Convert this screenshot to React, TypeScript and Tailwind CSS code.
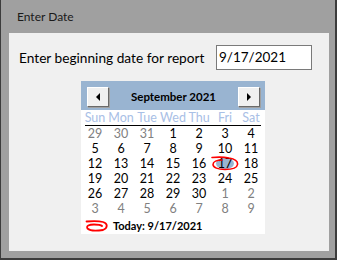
import type { ReactNode } from 'react';

const FONT = { fontFamily: 'Lato, "Noto Sans", sans-serif' };

type Day = { n: number; muted?: boolean };

const WEEKS: Day[][] = [
  [{ n: 29, muted: true }, { n: 30, muted: true }, { n: 31, muted: true }, { n: 1 }, { n: 2 }, { n: 3 }, { n: 4 }],
  [{ n: 5 }, { n: 6 }, { n: 7 }, { n: 8 }, { n: 9 }, { n: 10 }, { n: 11 }],
  [{ n: 12 }, { n: 13 }, { n: 14 }, { n: 15 }, { n: 16 }, { n: 17 }, { n: 18 }],
  [{ n: 19 }, { n: 20 }, { n: 21 }, { n: 22 }, { n: 23 }, { n: 24 }, { n: 25 }],
  [{ n: 26 }, { n: 27 }, { n: 28 }, { n: 29 }, { n: 30 }, { n: 1, muted: true }, { n: 2, muted: true }],
  [
    { n: 3, muted: true },
    { n: 4, muted: true },
    { n: 5, muted: true },
    { n: 6, muted: true },
    { n: 7, muted: true },
    { n: 8, muted: true },
    { n: 9, muted: true },
  ],
];

const DAY_NAMES = ['Sun', 'Mon', 'Tue', 'Wed', 'Thu', 'Fri', 'Sat'];

function NavButton({ children }: { children: ReactNode }) {
  return (
    <button
      type="button"
      className="w-[22px] h-[20px] flex items-center justify-center bg-[#f0f0f0] border border-t-white border-l-white border-r-[#696969] border-b-[#696969] shadow-[1px_1px_0_#a0a0a0]"
    >
      {children}
    </button>
  );
}

/** Month calendar with the selected day and the hand-drawn red marks. */
function MonthCalendar() {
  return (
    <div className="w-[184px] h-[153px] bg-white flex flex-col">
      <div className="h-[30px] bg-[#99b4d1] flex items-start justify-between pl-[6px] pr-[5px] pt-[6px]">
        <NavButton>
          <svg width="5" height="8" viewBox="0 0 5 8">
            <path d="M4 0 L0 4 L4 8 Z" fill="#000" />
          </svg>
        </NavButton>
        <span className="text-[11.5px] font-bold text-black leading-[20px]">September 2021</span>
        <NavButton>
          <svg width="5" height="8" viewBox="0 0 5 8">
            <path d="M1 0 L5 4 L1 8 Z" fill="#000" />
          </svg>
        </NavButton>
      </div>
      <div className="grid grid-cols-7 px-[1px] h-[14px] mt-[1px]">
        {DAY_NAMES.map((d) => (
          <span key={d} className="text-center text-[12.5px] leading-[14px] text-[#a9c0e6]">
            {d}
          </span>
        ))}
      </div>
      <div className="mx-[4px] h-[1px] bg-black" />
      <div className="flex flex-col px-[1px]">
        {WEEKS.map((week, wi) => (
          <div key={wi} className="grid grid-cols-7 h-[15px]">
            {week.map((d, di) => {
              const selected = wi === 2 && d.n === 17;
              return (
                <span
                  key={di}
                  className={[
                    'relative text-center text-[12.5px] leading-[15px]',
                    d.muted ? 'text-[#808080]' : 'text-black',
                  ].join(' ')}
                >
                  {selected && (
                    <span className="absolute left-[4px] top-[2px] w-[18px] h-[11px] rounded-[50%] bg-[#99b4d1]" />
                  )}
                  <span className="relative">{d.n}</span>
                  {selected && (
                    <svg
                      className="absolute left-[-1px] top-0"
                      width="30"
                      height="16"
                      viewBox="0 0 30 16"
                      fill="none"
                    >
                      <path
                        d="M1 1.5 C6 1 13 1 18 2 C24 3 27 5.5 26.5 8.5 C26 12 20 13.5 14 13.5 C7 13.5 2 11.5 2 8.5 C2 5.5 6 4 11 4"
                        stroke="#ff0000"
                        strokeWidth="1.6"
                        strokeLinecap="round"
                      />
                    </svg>
                  )}
                </span>
              );
            })}
          </div>
        ))}
      </div>
      <div className="flex items-center pl-[4px] mt-[2px] h-[16px]">
        <svg width="25" height="12" viewBox="0 0 25 12" fill="none">
          <path
            d="M1.5 1.5 C8 1 14 1 18 2 C23 3.5 23 8 18 10 C12 11 5 11 2.5 8.5 C1 6 4 4.5 9 4.5 C13 4.5 16 5 17 6"
            stroke="#ff0000"
            strokeWidth="1.8"
            strokeLinecap="round"
          />
        </svg>
        <span className="ml-[3px] text-[11px] font-bold text-black leading-[16px]">Today: 9/17/2021</span>
      </div>
    </div>
  );
}

export default function App() {
  return (
    <div
      className="w-[337px] h-[260px] bg-[#a0a0a0] border-l border-r-2 border-b-2 border-[#3c3c3c] flex flex-col"
      style={FONT}
    >
      <div className="h-[33px] pl-[16px] flex items-center text-[12px] text-[#1a1a1a]">Enter Date</div>
      <div className="ml-[8px] mr-[6px] h-[218px] bg-[#f0f0f0] flex flex-col">
        <div className="flex items-center mt-[12px] h-[25px]">
          <span className="pl-[10px] text-[13.7px] text-black leading-none whitespace-nowrap">
            Enter beginning date for report
          </span>
          <div className="ml-auto mr-[17px] w-[96px] h-[25px] shrink-0 bg-white border border-[#7a7a7a] flex items-center pl-[2px] text-[13.5px] text-black">
            9/17/2021
          </div>
        </div>
        <div className="ml-[72px] mt-[11px]">
          <MonthCalendar />
        </div>
      </div>
    </div>
  );
}
